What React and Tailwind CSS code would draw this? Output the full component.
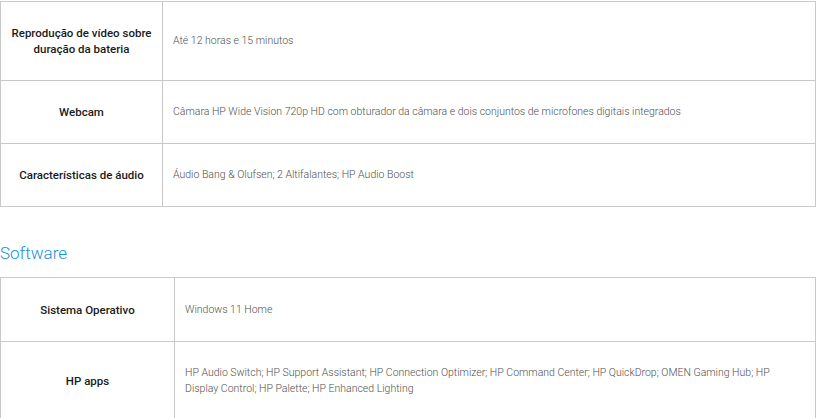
import React from 'react';

const audioRows = [
  { label: ['Reprodução de vídeo sobre', 'duração da bateria'], value: 'Até 12 horas e 15 minutos', h: 'h-[79px]' },
  { label: ['Webcam'], value: 'Câmara HP Wide Vision 720p HD com obturador da câmara e dois conjuntos de microfones digitais integrados', h: 'h-[63px]' },
  { label: ['Características de áudio'], value: 'Áudio Bang & Olufsen; 2 Altifalantes; HP Audio Boost', h: 'h-[63px]' },
];

const softwareRows = [
  { label: ['Sistema Operativo'], value: 'Windows 11 Home', h: 'h-[64px]' },
  {
    label: ['HP apps'],
    value: 'HP Audio Switch; HP Support Assistant; HP Connection Optimizer; HP Command Center; HP QuickDrop; OMEN Gaming Hub; HP Display Control; HP Palette; HP Enhanced Lighting',
    h: 'h-[78px]',
  },
];

const SpecTable = ({ rows, labelWidth, className }) => (
  <div className={`w-[816px] border-l border-r border-t border-[#c9c9c9] ${className || ''}`}>
    {rows.map((row, i) => (
      <div key={i} className={`flex border-b border-[#c9c9c9] ${row.h}`}>
        <div className={`${labelWidth} shrink-0 border-r border-[#c9c9c9] flex flex-col items-center justify-center text-center text-[11.5px] leading-4 font-medium text-[#1a1a1a]`}>
          {row.label.map((l, j) => (
            <span key={j}>{l}</span>
          ))}
        </div>
        <div className="flex-1 flex items-center pl-[10px] pr-[44px] text-[10.5px] leading-4 font-light text-[#505050]">
          {row.value}
        </div>
      </div>
    ))}
  </div>
);

export default function App() {
  return (
    <div className="w-[817px] h-[418px] overflow-hidden bg-white pt-px" style={{ fontFamily: 'Roboto, "Open Sans", sans-serif' }}>
      <SpecTable rows={audioRows} labelWidth="w-[162px]" />
      <h2 className="mt-[34px] text-[17px] leading-6 font-light text-[#1a8fd3]">Software</h2>
      <SpecTable rows={softwareRows} labelWidth="w-[174px]" className="mt-[12px]" />
    </div>
  );
}
